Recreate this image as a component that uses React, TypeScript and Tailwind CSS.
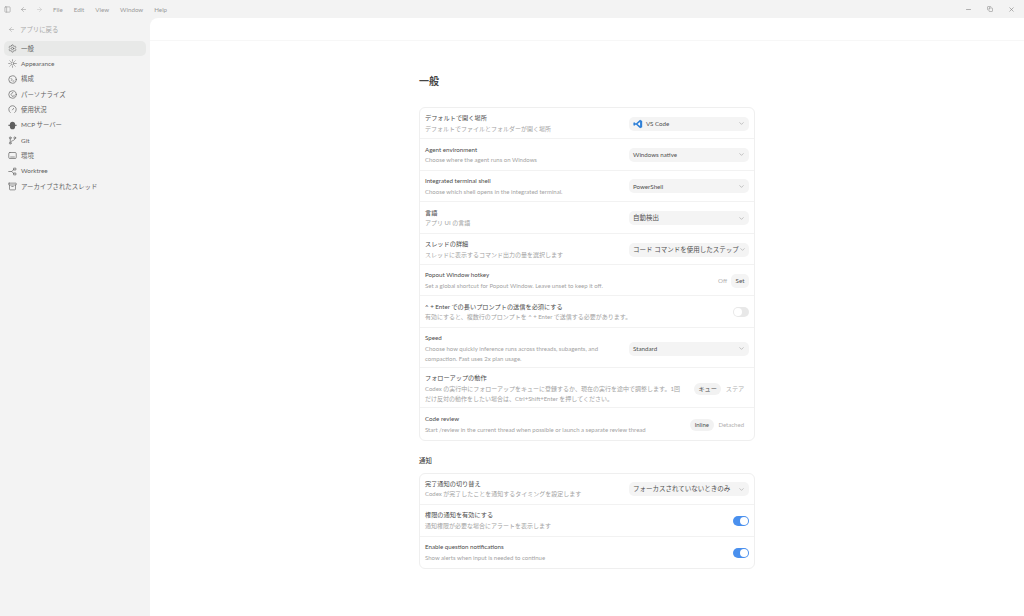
import React from "react";
import { ArrowLeft, ArrowRight, Archive, ChevronDown, Minus, PanelLeft, Settings, Sun, X, Copy } from "lucide-react";

const font = { fontFamily: '"Lato","Noto Sans CJK JP",sans-serif' };

const S = ({ children, fill }: { children: React.ReactNode; fill?: boolean }) => (
  <svg width="9" height="9" viewBox="0 0 24 24" fill={fill ? "currentColor" : "none"} stroke={fill ? "none" : "currentColor"} strokeWidth="1.8" strokeLinecap="round" strokeLinejoin="round" className="shrink-0">{children}</svg>
);

const nav: [string, React.ReactNode][] = [
  ["一般", <Settings size={9} strokeWidth={1.6} className="shrink-0" />],
  ["Appearance", <Sun size={9} strokeWidth={1.6} className="shrink-0" />],
  ["構成", <S><circle cx="12" cy="12" r="10" /><path d="M8 9l3 3-3 3M13 16h3" /></S>],
  ["パーソナライズ", <S><circle cx="12" cy="12" r="10" /><path d="M13 6l-5 6 5 6" /><path d="M16 14v3" /></S>],
  ["使用状況", <S><path d="M6 20a10 10 0 1 1 12 0" /><path d="M12 13l3-4" /></S>],
  ["MCP サーバー", <S fill><path d="M12 2c4 0 7 3 7 7v6c0 4-3 7-7 7s-7-3-7-7V9c0-4 3-7 7-7z" /><rect x="1" y="10" width="22" height="3" /></S>],
  ["Git", <S><circle cx="6" cy="5" r="2.5" /><circle cx="6" cy="19" r="2.5" /><circle cx="18" cy="5" r="2.5" /><path d="M6 8v8M18 8c0 4-6 4-9 6" /></S>],
  ["環境", <S><rect x="2" y="4" width="20" height="16" rx="3" /><path d="M7 16h10" /></S>],
  ["Worktree", <S><path d="M2 12h8l6-6M10 12l6 6" /><rect x="16" y="3" width="5" height="5" /><rect x="16" y="16" width="5" height="5" /></S>],
  ["アーカイブされたスレッド", <Archive size={9} strokeWidth={1.7} className="shrink-0" />],
];

function Select({ label, vs, jp }: { label: string; vs?: boolean; jp?: boolean }) {
  return (
    <div className={`flex h-[14px] w-[120px] shrink-0 items-center justify-between rounded-[5px] bg-[#f4f4f4] pl-[4px] pr-[3px] text-[#505050] ${jp ? "text-[6.5px]" : "text-[6.2px]"}`}>
      <span className="flex items-center gap-[3px] whitespace-nowrap">
        {vs && (
          <svg width="10" height="10" viewBox="0 0 24 24">
            <path d="M17 2l5 2.5v15L17 22 7 13l-4 3-2-1V9l2-1 4 3z" fill="#2f80d8" />
            <path d="M17 7l-6 5 6 5z" fill="#fff" />
          </svg>
        )}
        {label}
      </span>
      <ChevronDown size={7} strokeWidth={1.6} className="mr-[1px] shrink-0 text-[#888]" />
    </div>
  );
}

function Toggle({ on }: { on?: boolean }) {
  return (
    <div className={`flex h-[10px] w-[16px] shrink-0 items-center rounded-full px-[1px] ${on ? "justify-end bg-[#4a90ee]" : "justify-start bg-[#e8e8e8]"}`}>
      <div className="h-[8px] w-[8px] rounded-full bg-white" />
    </div>
  );
}

function Row({ title, desc, h, children, wide, w }: { title: string; desc: React.ReactNode; h: string; children: React.ReactNode; wide?: boolean; w?: string }) {
  return (
    <div className={`flex items-center justify-between border-b border-[#f2f2f2] pl-[5px] pr-[5px] last:border-b-0 ${h}`}>
      <div className={w ?? (wide ? "w-[262px]" : "w-[190px]")}>
        <div className="text-[6.2px] leading-[10px] text-[#4a4a4a]">{title}</div>
        <div className="mt-[0.5px] text-[6px] leading-[10px] text-[#a3a3a3]">{desc}</div>
      </div>
      {children}
    </div>
  );
}

export default function App() {
  return (
    <div style={font} className="flex h-[616px] w-[1024px] flex-col overflow-hidden bg-[#f3f3f3]">
      <div className="flex h-[18px] shrink-0 items-center text-[6.2px] text-[#9a9a9a]">
        <PanelLeft size={7} className="ml-[4px]" />
        <ArrowLeft size={7} className="ml-[9px]" />
        <ArrowRight size={7} className="ml-[9px] text-[#c4c4c4]" />
        <span className="ml-[10px] pt-[1px]">File</span>
        <span className="ml-[11px] pt-[1px]">Edit</span>
        <span className="ml-[11px] pt-[1px]">View</span>
        <span className="ml-[11px] pt-[1px]">Window</span>
        <span className="ml-[11px] pt-[1px]">Help</span>
        <div className="ml-auto flex items-center gap-[15px] pr-[9px] text-[#808080]">
          <Minus size={7} />
          <Copy size={6} />
          <X size={7} />
        </div>
      </div>
      <div className="flex min-h-0 flex-1">
        <aside className="w-[150px] shrink-0 px-[4px]">
          <div className="flex h-[23px] items-center gap-[5px] pl-[4px] text-[6.4px] text-[#a8a8a8]">
            <ArrowLeft size={7} />
            アプリに戻る
          </div>
          <nav className="flex flex-col">
            {nav.map(([label, icon], i) => (
              <div key={label} className={`flex h-[15.3px] items-center gap-[4px] rounded-[5px] pl-[4px] text-[6.4px] text-[#5f5f5f] ${i === 0 ? "bg-[#e8e9e8]" : ""}`}>
                {icon}
                {label}
              </div>
            ))}
          </nav>
        </aside>
        <main className="min-w-0 flex-1 rounded-tl-[8px] bg-white">
          <div className="h-[23px] border-b border-[#f7f7f7]" />
          <div className="ml-[269px] w-[336px]">
            <h1 className="mt-[32px] text-[10px] font-semibold leading-[16px] text-[#444]">一般</h1>
            <div className="mt-[18px] rounded-[6px] border border-[#efefef]">
              <Row h="h-[31px] pt-[1px]" title="デフォルトで開く場所" desc="デフォルトでファイルとフォルダーが開く場所"><Select label="VS Code" vs /></Row>
              <Row h="h-[31.5px] pt-[1px]" title="Agent environment" desc="Choose where the agent runs on Windows"><Select label="Windows native" /></Row>
              <Row h="h-[31.5px] pt-[1px]" title="Integrated terminal shell" desc="Choose which shell opens in the integrated terminal."><Select label="PowerShell" /></Row>
              <Row h="h-[32px] pt-[1px]" title="言語" desc="アプリ UI の言語"><Select label="自動検出" jp /></Row>
              <Row h="h-[31px] pt-[1px]" title="スレッドの詳細" desc="スレッドに表示するコマンド出力の量を選択します"><Select label="コード コマンドを使用したステップ" jp /></Row>
              <Row h="h-[31px] pt-[1px]" title="Popout Window hotkey" desc="Set a global shortcut for Popout Window. Leave unset to keep it off." wide>
                <div className="flex items-center gap-[4px] text-[6.2px]">
                  <span className="text-[#b0b0b0]">Off</span>
                  <span className="flex h-[14px] w-[18px] items-center justify-center rounded-[5px] bg-[#f4f4f4] text-[#505050]">Set</span>
                </div>
              </Row>
              <Row h="h-[32px] pt-[1px]" title="^ + Enter での長いプロンプトの送信を必須にする" desc="有効にすると、複数行のプロンプトを ^ + Enter で送信する必要があります。" wide><Toggle /></Row>
              <Row h="h-[40px] pt-[2px]" title="Speed" w="w-[180px]" desc="Choose how quickly inference runs across threads, subagents, and compaction. Fast uses 2x plan usage."><Select label="Standard" /></Row>
              <Row h="h-[40px] pt-[2px]" title="フォローアップの動作" w="w-[259px]" desc="Codex の実行中にフォローアップをキューに登録するか、現在の実行を途中で調整します。1回だけ反対の動作をしたい場合は、Ctrl+Shift+Enter を押してください。">
                <div className="flex items-center text-[6.2px]">
                  <span className="flex h-[12px] items-center rounded-full bg-[#f2f2f2] px-[4px] text-[#505050]">キュー</span>
                  <span className="w-[28px] text-center text-[#b0b0b0]">ステア</span>
                </div>
              </Row>
              <Row h="h-[32px] pt-[1px]" title="Code review" desc="Start /review in the current thread when possible or launch a separate review thread" wide>
                <div className="flex items-center text-[6px]">
                  <span className="flex h-[12px] items-center rounded-full bg-[#f2f2f2] px-[5px] text-[#505050]">Inline</span>
                  <span className="w-[35px] pr-[5px] text-right text-[#b0b0b0]">Detached</span>
                </div>
              </Row>
            </div>
            <h2 className="mt-[15px] text-[6.4px] font-medium leading-[10px] text-[#444]">通知</h2>
            <div className="mt-[7px] rounded-[6px] border border-[#efefef]">
              <Row h="h-[31px]" title="完了通知の切り替え" desc="Codex が完了したことを通知するタイミングを設定します"><Select label="フォーカスされていないときのみ" jp /></Row>
              <Row h="h-[32px]" title="権限の通知を有効にする" desc="通知権限が必要な場合にアラートを表示します"><Toggle on /></Row>
              <Row h="h-[31px]" title="Enable question notifications" desc="Show alerts when input is needed to continue"><Toggle on /></Row>
            </div>
          </div>
        </main>
      </div>
    </div>
  );
}
